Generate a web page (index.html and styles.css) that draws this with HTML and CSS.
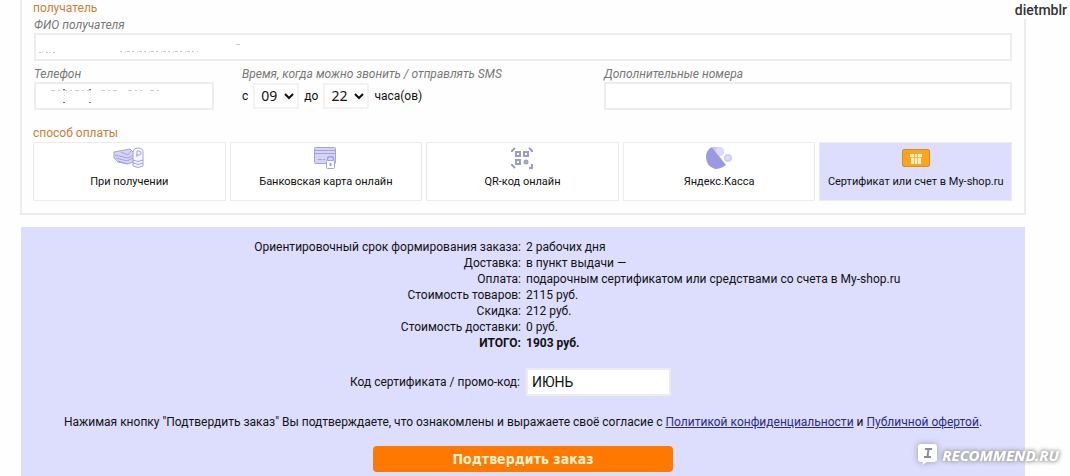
FILE: index.html
```html
<!DOCTYPE html>
<html lang="ru">
<head>
    <meta charset="UTF-8">
    <meta name="viewport" content="width=device-width, initial-scale=1.0">
    <title>Оформление заказа</title>
    <link rel="stylesheet" href="styles.css">
</head>
<body>
    <form class="order">
        <div class="card">
            <h2>получатель</h2>
            <div class="fields">
                <div class="field wide">
                    <label for="fio">ФИО получателя</label>
                    <div class="masked">
                        <input type="text" id="fio">
                        <svg class="specks" width="220" height="24" viewBox="0 0 220 24" fill="none" stroke="#ccc">
                            <path d="M5 19.500H21" stroke-dasharray="2 1 1 3"/>
                            <path d="M86 18.500H165" stroke-dasharray="2 3 1 1 3 2"/>
                            <path d="M202 11.500H206"/>
                        </svg>
                    </div>
                </div>
                <div class="field">
                    <label for="phone">Телефон</label>
                    <div class="masked">
                        <input type="text" id="phone">
                        <svg class="specks" width="140" height="24" viewBox="0 0 140 24" fill="none" stroke="#ccc">
                            <path d="M17 8.500H57M67 8.500H85M94 8.500H108M116 8.500H127" stroke-dasharray="4 3 2 3"/>
                            <path d="M29 7.500H31M55 7.500H57M29 20.500H31M55 20.500H57" stroke="#777"/>
                            <path d="M30.500 10V17M56.500 10V17" stroke="#e4e4e4" stroke-dasharray="1 2"/>
                        </svg>
                    </div>
                </div>
                <div class="field">
                    <span class="caption">Время, когда можно звонить / отправлять SMS</span>
                    <div class="time">
                        <label for="from">с</label>
                        <select id="from"><option>09</option></select>
                        <label for="to">до</label>
                        <select id="to"><option>22</option></select>
                        <span>часа(ов)</span>
                    </div>
                </div>
                <div class="field">
                    <label for="extra">Дополнительные номера</label>
                    <input type="text" id="extra">
                </div>
            </div>

            <h2>способ оплаты</h2>
            <div class="methods">
                <button type="button" class="method">
                    <svg width="32" height="22" viewBox="0 0 32 22" fill="#d5d4f7" stroke="#a3a2dc">
                        <path d="M1 5L17 2L22 7L20 15L15 17L5 15L1 11Z"/>
                        <path d="M2 8L15 11L21 8M3 11L14 14L20 11M5 14L14 17M8 5L15 8L18 4" fill="none"/>
                        <path d="M20 4Q21 1 25 1Q30 1 30 5V19Q25 22 20 19Z" fill="#f4f4fd"/>
                        <path d="M20 13Q25 16 30 13M20 16Q25 19 30 16" fill="none"/>
                        <path d="M24 10V4H26Q28 4 28 6Q28 8 26 8H23" fill="none"/>
                    </svg>
                    При получении
                </button>
                <button type="button" class="method">
                    <svg width="24" height="22" viewBox="0 0 24 22" fill="#d5d4f7" stroke="#a3a2dc">
                        <rect x="0.500" y="0.500" width="21" height="16" rx="1"/>
                        <path d="M1 3.500H22M1 6.500H22M4 12.500H8M9 12.500H11" fill="none"/>
                        <path d="M13.500 14V12Q13.500 9.500 16.500 9.500Q19.500 9.500 19.500 12V14" fill="none" stroke-width="1.500"/>
                        <rect x="12.500" y="13.500" width="8" height="8" rx="1" fill="#fff"/>
                        <path d="M16.500 16V19" stroke-width="2"/>
                    </svg>
                    Банковская карта онлайн
                </button>
                <button type="button" class="method">
                    <svg width="24" height="22" viewBox="0 0 24 22" fill="none" stroke="#9d9bc8" stroke-width="2">
                        <path d="M2 5V4L5 1M19 1L22 4V5M2 17V18L5 21M19 21H22V17"/>
                        <rect x="6" y="5" width="4" height="4"/>
                        <rect x="14" y="5" width="4" height="4"/>
                        <rect x="6" y="13" width="4" height="4"/>
                        <circle cx="16" cy="15" r="1.500"/>
                    </svg>
                    QR-код онлайн
                </button>
                <button type="button" class="method">
                    <svg width="28" height="22" viewBox="0 0 28 22">
                        <path d="M7 0L21 18Q16 22 10 22Q1 19 1 10Q1 3 7 0Z" fill="#9c99e4"/>
                        <path d="M7 0H16Q20 3 18 8L14 9Z" fill="#c9c7f3"/>
                        <circle cx="15" cy="4" r="4" fill="#dcdaf8"/>
                        <circle cx="23" cy="11" r="4" fill="#d0cef5"/>
                        <circle cx="23" cy="11" r="2" fill="#dddcf9"/>
                    </svg>
                    Яндекс.Касса
                </button>
                <button type="button" class="method active">
                    <svg width="28" height="22" viewBox="0 0 28 22">
                        <rect x="0.500" y="2.500" width="27" height="17" rx="1.500" fill="#f9a61d" stroke="#d98a20"/>
                        <path d="M8 7H20V10H19V17H9V10H8Z" fill="#fff3c9"/>
                        <path d="M12.500 7V17M15.500 7V17M8 10.500H20" stroke="#f5b650"/>
                    </svg>
                    Сертификат или счет в My-shop.ru
                </button>
            </div>
        </div>

        <div class="summary">
            <table>
                <tr><th>Ориентировочный срок формирования заказа:</th><td>2 рабочих дня</td></tr>
                <tr><th>Доставка:</th><td>в пункт выдачи —</td></tr>
                <tr><th>Оплата:</th><td>подарочным сертификатом или средствами со счета в My-shop.ru</td></tr>
                <tr><th>Стоимость товаров:</th><td>2115 руб.</td></tr>
                <tr><th>Скидка:</th><td>212 руб.</td></tr>
                <tr><th>Стоимость доставки:</th><td>0 руб.</td></tr>
                <tr class="total"><th>ИТОГО:</th><td>1903 руб.</td></tr>
            </table>
            <div class="promo">
                <label for="code">Код сертификата / промо-код:</label>
                <input type="text" id="code" value="ИЮНЬ">
            </div>
            <p>Нажимая кнопку "Подтвердить заказ" Вы подтверждаете, что ознакомлены и выражаете своё согласие с <a href="#">Политикой конфиденциальности</a> и <a href="#">Публичной офертой</a>.</p>
            <button type="submit" class="submit">Подтвердить заказ</button>
        </div>
    </form>

    <div class="user">dietmblr</div>
    <div class="watermark">
        <svg width="22" height="24" viewBox="0 0 22 24">
            <path d="M4 1H17Q20 1 20 4V16Q20 19 17 19H10L5 22L6 19H4Q1 19 1 16V4Q1 1 4 1Z" fill="#fff"/>
            <path d="M8 6H15M7 14H14M11.500 6L10.500 14" stroke="#8c8c9c" stroke-width="2"/>
        </svg>
        <span>RECOMMEND.RU</span>
    </div>
</body>
</html>
```
FILE: styles.css
```css
:root {
    --lilac: #dddefe;
    --line: #ececec;
    --orange: #ff7800;
    --title: #c9803c;
}

* {
    margin: 0;
    padding: 0;
    box-sizing: border-box;
}

body {
    position: relative;
    min-height: 100vh;
    overflow: hidden;
    background: #fefefe;
    color: #111;
    font: 12px/16px Roboto, sans-serif;
}

button, input, select {
    font: inherit;
    color: inherit;
}

.order {
    padding: 0 44px 0 20px;
}

.card {
    padding: 0 12px 12px 11px;
    border: 2px solid var(--line);
    border-top: none;
}

h2 {
    color: var(--title);
    font-size: 12px;
    font-weight: normal;
}

.fields {
    display: grid;
    grid-template-columns: 180px 9fr 11fr;
    column-gap: 28px;
    row-gap: 5px;
    margin: 1px 0 15px;
    padding-left: 1px;
}

.field {
    display: flex;
    flex-direction: column;
}

.wide {
    grid-column: span 3;
}

.field > label, .caption {
    color: #777;
    font-style: italic;
}

input {
    width: 100%;
    height: 28px;
    padding: 0 4px;
    border: 2px solid var(--line);
    background: #fff;
    font-size: 14px;
}

.masked {
    position: relative;
}

.specks {
    position: absolute;
    left: 0;
    top: 0;
}

.time {
    display: flex;
    align-items: center;
    gap: 5px;
    height: 28px;
}

select {
    appearance: none;
    width: 46px;
    height: 26px;
    padding-left: 6px;
    border: 2px solid #f2f2f2;
    background: #fff url("data:image/svg+xml,%3Csvg xmlns='http://www.w3.org/2000/svg' width='10' height='7'%3E%3Cpath d='M1 1l4 4 4-4' fill='none' stroke='%23111' stroke-width='2'/%3E%3C/svg%3E") no-repeat right 3px center;
    font-family: "Noto Sans", sans-serif;
    font-size: 14px;
}

.methods {
    display: grid;
    grid-template-columns: repeat(5, 1fr);
    gap: 4px;
    margin-top: 1px;
}

.method {
    display: flex;
    flex-direction: column;
    align-items: center;
    gap: 5px;
    height: 59px;
    padding-top: 4px;
    border: 1px solid var(--line);
    background: #fff;
    font-size: 11px;
    white-space: nowrap;
    cursor: pointer;
}

.active {
    background: var(--lilac);
}

.summary {
    display: flex;
    flex-direction: column;
    align-items: center;
    margin: 12px 1px 0;
    padding: 12px 0 4px;
    background: var(--lilac);
}

table {
    width: 100%;
    table-layout: fixed;
    border-collapse: collapse;
}

th {
    padding-right: 2px;
    font-weight: normal;
    text-align: right;
}

td {
    padding-left: 3px;
}

.total th, .total td {
    font-weight: bold;
}

.promo {
    display: grid;
    grid-template-columns: 1fr 1fr;
    align-items: center;
    gap: 6px;
    width: 100%;
    margin: 17px 0 18px;
    text-align: right;
}

.promo input {
    width: 145px;
}

a {
    color: #2a2a86;
}

.submit {
    width: 300px;
    height: 26px;
    margin-top: 16px;
    border: none;
    border-radius: 4px;
    background: var(--orange);
    color: #fff3d0;
    font-family: "DejaVu Sans Condensed", sans-serif;
    font-size: 14px;
    font-weight: bold;
    cursor: pointer;
}

/* photo credits over the page */
.user {
    position: absolute;
    top: 0;
    right: 0;
    padding: 2px 3px 0 4px;
    background: #fefefe;
    color: #333;
    font: 500 14px/17px Roboto, sans-serif;
}

.watermark {
    position: absolute;
    right: 11px;
    bottom: 9px;
    display: flex;
    align-items: center;
    gap: 3px;
    color: #fff;
    font: italic bold 15px/24px "Noto Sans", sans-serif;
    text-shadow: 0 0 3px #aaa, 0 0 5px #999, 0 0 5px #aaa;
}

.watermark svg {
    filter: drop-shadow(0 0 3px #999);
}
```
